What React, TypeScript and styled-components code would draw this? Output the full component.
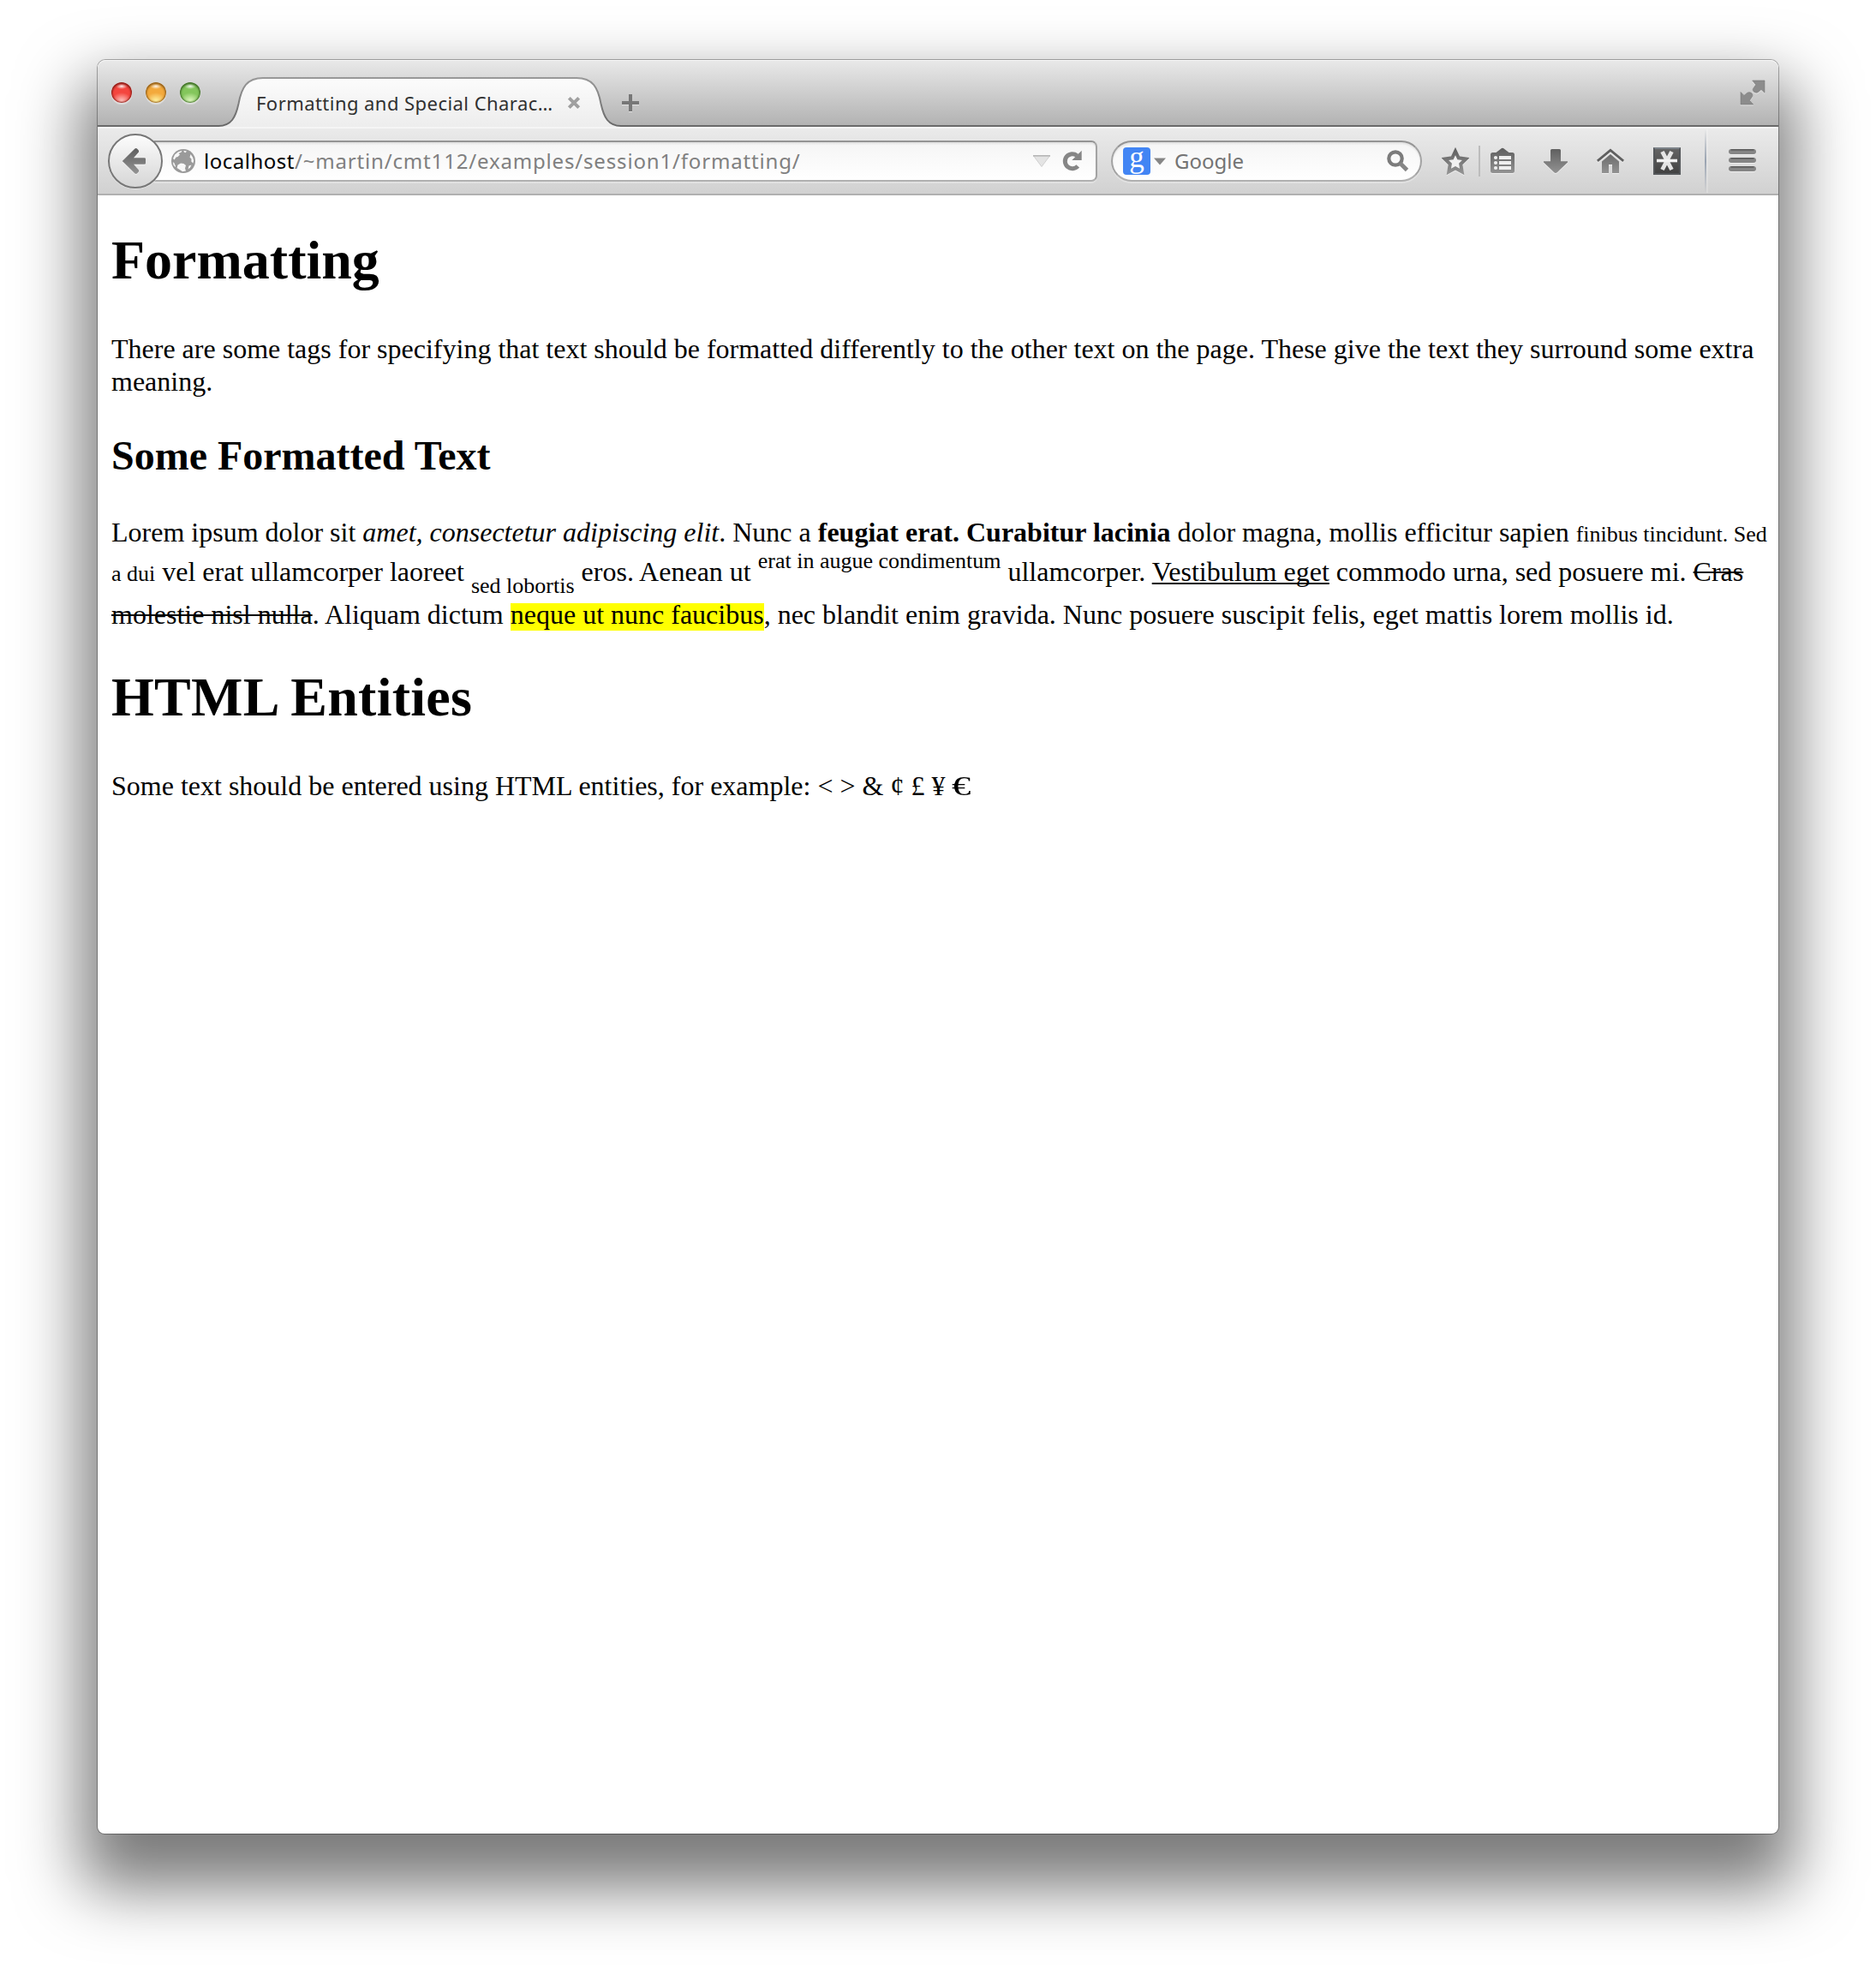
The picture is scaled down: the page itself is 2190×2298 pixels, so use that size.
import React from "react";
import styled, { createGlobalStyle } from "styled-components";

const GlobalStyle = createGlobalStyle`
  *, *::before, *::after { box-sizing: border-box; }
  body { margin: 0; background: #fff; }
`;

const uiFont = `"Noto Sans", "Open Sans", sans-serif`;

const Desktop = styled.div`
  height: 2298px;
  padding: 70px 114px 158px;
  background: #fff;
  overflow: hidden;
`;

const Window = styled.div`
  display: flex;
  flex-direction: column;
  height: 2070px;
  border-radius: 9px 9px 8px 8px;
  background: #fff;
  box-shadow:
    0 0 0 1px rgba(0, 0, 0, 0.3),
    0 45px 74px 19px rgba(0, 0, 0, 0.52);
`;

const TitleBar = styled.div`
  display: flex;
  align-items: flex-end;
  height: 78px;
  border-radius: 9px 9px 0 0;
  background:
    linear-gradient(#6a6a6a, #6a6a6a) 0 100% / 100% 2px no-repeat,
    linear-gradient(#e9e9e9, #b1b1b1);
  box-shadow: inset 0 1px 0 #f7f7f7;
`;

const Lights = styled.div`
  display: flex;
  align-self: flex-start;
  gap: 16px;
  width: 141px;
  padding: 26px 0 0 16px;
`;

const Light = styled.span<{ $rim: string; $mid: string; $glow: string }>`
  width: 24px;
  height: 24px;
  border-radius: 50%;
  background:
    radial-gradient(ellipse 7px 3.5px at 50% 4.5px, rgba(255, 255, 255, 0.95), rgba(255, 255, 255, 0) 100%),
    radial-gradient(ellipse 12px 10px at 50% 92%, ${(p) => p.$glow}, transparent 100%),
    ${(p) => p.$mid};
  box-shadow:
    inset 0 0 2px 1px ${(p) => p.$rim},
    inset 0 2px 3px ${(p) => p.$rim},
    0 2px 1px rgba(255, 255, 255, 0.45);
`;

const Tab = styled.div`
  display: grid;
  width: 470px;
  height: 58px;
  & > * { grid-area: 1 / 1; }
`;

const TabLabel = styled.div`
  display: flex;
  align-items: center;
  padding: 2px 47px 0 44px;
  font: 22px/30px ${uiFont};
  color: #303030;
`;

const TabTitle = styled.span`
  flex: 1;
  white-space: nowrap;
  letter-spacing: 0.45px;
`;

const NewTab = styled.div`
  align-self: flex-end;
  width: 24px;
  height: 39px;
`;

const FullScreen = styled.div`
  margin-left: auto;
  align-self: flex-start;
  padding: 23px 15px 0 0;
`;

const Glyph = styled.svg`
  display: block;
  flex: none;
  filter: drop-shadow(0 1.5px 0 rgba(255, 255, 255, 0.55));
`;

const NavBar = styled.div`
  display: flex;
  align-items: center;
  height: 80px;
  padding: 2px 26px 0 12px;
  border-bottom: 2px solid #b0b0b0;
  background:
    linear-gradient(#f5f5f5, #f5f5f5) 0 0 / 100% 2px no-repeat,
    linear-gradient(#ebebeb, #d1d1d1);
`;

const BackButton = styled.div`
  display: flex;
  align-items: center;
  justify-content: center;
  z-index: 1;
  flex: none;
  width: 64px;
  height: 64px;
  border: 2px solid #777;
  border-radius: 50%;
  background: linear-gradient(#fcfcfc, #d6d6d6);
  box-shadow: inset 0 1px 0 #fff, 0 1px 0 rgba(255, 255, 255, 0.5);
`;

const Field = styled.div`
  display: flex;
  align-items: center;
  height: 48px;
  border: 2px solid #a3a3a3;
  border-top-color: #949494;
  border-bottom-color: #b0b0b0;
  background: linear-gradient(#f5f5f5, #fff);
  box-shadow: inset 0 2px 2px rgba(0, 0, 0, 0.08), 0 2px 0 rgba(255, 255, 255, 0.3);
  font: 24px/40px ${uiFont};
  white-space: nowrap;
`;

const UrlField = styled(Field)`
  width: 1101px;
  margin-left: -10px;
  padding: 0 15px 0 20px;
  border-left: 0;
  border-radius: 0 7px 7px 0;
  color: #808080;
`;

const Address = styled.span`
  flex: 1;
  margin-left: 10px;
  letter-spacing: 0.83px;
`;

const Host = styled.span`
  color: #000;
  letter-spacing: 0.5px;
`;

const SearchField = styled(Field)`
  width: 363px;
  margin-left: 16px;
  padding: 0 13px 0 12px;
  border-radius: 24px;
  color: #747474;
`;

const Engine = styled.span`
  width: 32px;
  height: 32px;
  border-radius: 4px;
  background: #4285f4;
  color: #fff;
  font: 35px/24px "Liberation Serif", serif;
  text-align: center;
`;

const Placeholder = styled.span`
  flex: 1;
  margin-left: 10px;
`;

const Action = styled.div<{ $before: number }>`
  flex: none;
  margin-left: ${(p) => p.$before}px;
`;

const Divider = styled.div`
  flex: none;
  width: 2px;
  height: 36px;
  margin-left: 11px;
  background: #bcbcbc;
`;

const PanelDivider = styled.div`
  flex: none;
  width: 2px;
  height: 74px;
  margin-left: 28px;
  background: linear-gradient(rgba(150, 162, 178, 0), #99a3b1 50%, rgba(150, 162, 178, 0));
  box-shadow: 2px 0 0 rgba(255, 255, 255, 0.2);
`;

const Tile = styled.div`
  display: flex;
  align-items: center;
  justify-content: center;
  width: 32px;
  height: 32px;
  border: 2px solid #54575a;
  border-top-color: #7b8187;
  background: linear-gradient(#636363, #424242);
`;

const Page = styled.main`
  flex: 1;
  padding: 0 12px 0 16px;
  color: #000;
  font: 32px/38px "Liberation Serif", "Times New Roman", serif;
`;

const Title = styled.h1<{ $tracking?: number }>`
  margin: 41px 0 47px;
  font-size: 64px;
  line-height: 74px;
  letter-spacing: ${(p) => p.$tracking ?? 0}px;

  &:first-child {
    margin-top: 39px;
  }
`;

const Subtitle = styled.h2`
  margin: 40px 0 42px;
  font-size: 48px;
  line-height: 56px;
`;

const Paragraph = styled.p`
  margin: 0;
`;

const Small = styled.small`
  font-size: 26px;
  line-height: 28px;
`;

const Sub = styled.sub`
  font-size: 26px;
  line-height: 28px;
  vertical-align: -14px;
`;

const Sup = styled.sup`
  font-size: 26px;
  line-height: 30px;
  vertical-align: 15px;
`;

const Underlined = styled.u`
  text-decoration-thickness: 2px;
  text-underline-offset: 2px;
  text-decoration-skip-ink: none;
`;

const Struck = styled.s`
  text-decoration-thickness: 2px;
`;

const Mark = styled.mark`
  padding-bottom: 2px;
  color: #000;
  background: linear-gradient(#ff0, #ff0) 0 5px / 100% 32px no-repeat;
`;

const WideSign = styled.span`
  display: inline-block;
  transform: scaleX(1.4);
  transform-origin: 0 50%;
`;

const SharedInk = () => (
  <svg width="0" height="0" style={{ display: "block" }}>
    <defs>
      <linearGradient id="ink" gradientUnits="userSpaceOnUse" x1="0" y1="0" x2="0" y2="32">
        <stop offset="0" stopColor="#5c5c5c" />
        <stop offset="1" stopColor="#969696" />
      </linearGradient>
    </defs>
  </svg>
);

const TabShape = () => (
  <svg width="470" height="58" viewBox="0 0 470 58">
    <defs>
      <linearGradient id="tabFill" x1="0" y1="0" x2="0" y2="1">
        <stop offset="0" stopColor="#fcfcfc" />
        <stop offset="1" stopColor="#ededed" />
      </linearGradient>
      <linearGradient id="tabEdge" gradientUnits="userSpaceOnUse" x1="0" y1="0" x2="0" y2="58">
        <stop offset="0" stopColor="#999" />
        <stop offset="1" stopColor="#666" />
      </linearGradient>
    </defs>
    <path
      d="M0 57C15 57 20 47 23.500 31C27 12 33 1 52 1H418C437 1 443 12 446.500 31C450 47 455 57 470 57V58H0Z"
      fill="url(#tabFill)"
    />
    <path
      d="M0 57C15 57 20 47 23.500 31C27 12 33 1 52 1H418C437 1 443 12 446.500 31C450 47 455 57 470 57"
      fill="none"
      stroke="url(#tabEdge)"
      strokeWidth="2"
    />
  </svg>
);

const CloseIcon = () => (
  <Glyph width="16" height="16" viewBox="0 0 16 16">
    <path d="M2.300 2.300L13.700 13.700M13.700 2.300L2.300 13.700" stroke="#a0a0a0" strokeWidth="4" />
  </Glyph>
);

const PlusIcon = () => (
  <Glyph width="22" height="22" viewBox="0 0 22 22">
    <path d="M9 1h4v8h8v4h-8v8H9v-8H1V9h8z" fill="#777" />
  </Glyph>
);

const FullScreenIcon = () => (
  <Glyph width="30" height="30" viewBox="0 0 30 30">
    <g fill="#8c8c8c" stroke="#777" strokeWidth=".6">
      <path d="M14.700 1H29V15.300L25 11.500L21.500 14.500C19 16.500 14 14 15.500 10.500L18.700 6Z" />
      <path d="M1 14.500L5 18.500L8.500 15.500C11.500 13.500 16 16 14.700 19.500L11.500 24.300L15.700 29H1Z" />
    </g>
  </Glyph>
);

const BackIcon = () => (
  <Glyph width="32" height="32" viewBox="0 0 32 32">
    <path
      d="M.8 16L15.500 1.500Q17 .5 18.500 2L20 3.800V5.500L14 12.200H26.500Q28 12.200 28 13.500V18.500Q28 19.800 26.500 19.800H14L20 26.500V28.300L18.500 30Q17 31.500 15.500 30.500Z"
      fill="url(#ink)"
    />
  </Glyph>
);

const GlobeIcon = () => (
  <svg width="28" height="28" viewBox="0 0 28 28">
    <circle cx="14" cy="14" r="14" fill="#9a9a9a" />
    <g fill="#f7f7f7">
      <path d="M2 11L4 6.500L8 3.200L12.500 1.800L11.500 3.800L8.500 5L10 6.500L7.500 9L5.500 9.500L3.500 12.500Z" />
      <path d="M14.500 1.800L18 2.500L16.500 4.200L14.800 3.500Z" />
      <path d="M22.500 6L25 9.500L26.200 13.500L25.300 16.500L23.300 14.500L23.500 11.500L21.500 9.500Z" />
      <path d="M7.500 18.500L11 16.500L14.500 17L17 19L16 22.500L17 25.500L13 26.200L10.500 24.500L6.500 22Z" />
      <path d="M1.800 15L3.500 16.500L5 20L4.500 21L2.500 18.500Z" />
      <path d="M20.500 19.500L23.500 18.500L22 21.500L19.500 23.500Z" />
    </g>
  </svg>
);

const HistoryIcon = () => (
  <svg width="20" height="14" viewBox="0 0 20 14">
    <path d="M.5 .8H19.500L10 13.500Z" fill="#e4e4e4" stroke="#cfcfcf" strokeWidth="1" />
    <path d="M0 .8H20" stroke="#b5b5b5" strokeWidth="1.500" />
  </svg>
);

const ReloadIcon = () => (
  <Glyph width="24" height="26" viewBox="0 0 24 26" style={{ marginLeft: 14 }}>
    <path d="M18.200 18.800A8.500 8.500 0 1 1 17.200 6.600" fill="none" stroke="#868686" strokeWidth="5" />
    <path d="M22.700 .7V12H11.300Z" fill="#868686" />
  </Glyph>
);

const CaretIcon = () => (
  <svg width="14" height="9" viewBox="0 0 14 9" style={{ marginLeft: 4 }}>
    <path d="M0 .5H14L7 8.500Z" fill="#858585" />
  </svg>
);

const SearchIcon = () => (
  <Glyph width="26" height="26" viewBox="0 0 26 26">
    <circle cx="10" cy="10" r="7.700" fill="none" stroke="#7b7b7b" strokeWidth="4.200" />
    <path d="M15.500 15.500L23.500 23.500" stroke="#858585" strokeWidth="4.800" />
  </Glyph>
);

const StarIcon = () => (
  <Glyph width="32" height="32" viewBox="0 0 32 32">
    <path
      d="M16 4.500L19.700 12.300L28.300 13.500L22.200 19.500L23.700 28.500L16 24.300L8.300 28.500L9.800 19.500L3.700 13.500L12.300 12.300Z"
      fill="#f1f1f1"
      stroke="url(#ink)"
      strokeWidth="4"
    />
  </Glyph>
);

const BookmarksIcon = () => (
  <Glyph width="32" height="32" viewBox="0 0 32 32">
    <path d="M4.500 6H8.500L15 1Q16 .3 17 1L23.500 6H27.500Q30 6 30 8.500V27.500Q30 30 27.500 30H4.500Q2 30 2 27.500V8.500Q2 6 4.500 6Z" fill="url(#ink)" />
    <g fill="#efefef">
      <circle cx="8" cy="12" r="2.100" />
      <circle cx="8" cy="18" r="2.100" />
      <circle cx="8" cy="24" r="2.100" />
      <path d="M12 10H26V14H12ZM12 16H26V20H12ZM12 22H26V26H12Z" />
    </g>
  </Glyph>
);

const DownloadIcon = () => (
  <Glyph width="32" height="32" viewBox="0 0 32 32">
    <path d="M11.500 2H20.500Q22 2 22 3.500V16.300H30V17.500L18 29Q16 31 14 29L2 17.500V16.300H10V3.500Q10 2 11.500 2Z" fill="url(#ink)" />
  </Glyph>
);

const HomeIcon = () => (
  <Glyph width="32" height="32" viewBox="0 0 32 32">
    <path d="M.8 15.800L16 3.300L31.200 15.800" fill="none" stroke="#5f5f5f" strokeWidth="2.800" />
    <path d="M16 8L26 16.500V30H18V20H14V30H6V16.500Z" fill="url(#ink)" />
  </Glyph>
);

const AsteriskIcon = () => (
  <svg width="28" height="28" viewBox="0 0 28 28">
    <g stroke="#f1f1f1" fill="none">
      <path d="M8.500 3L19.500 24M19.500 3L8.500 24" strokeWidth="4.800" opacity=".92" />
      <path d="M2 13.500H26" strokeWidth="3.600" />
    </g>
  </svg>
);

const MenuIcon = () => (
  <Glyph width="32" height="32" viewBox="0 0 32 32">
    {[2, 12, 22].map((y) => (
      <g key={y}>
        <rect x="0" y={y} width="32" height="6" rx="3" fill="#858585" />
        <path d={`M2.500 ${y + 0.8}H29.500`} stroke="#5a5a5a" strokeWidth="1.600" />
      </g>
    ))}
  </Glyph>
);

export default function App() {
  return (
    <Desktop>
      <GlobalStyle />
      <SharedInk />
      <Window>
        <TitleBar>
          <Lights>
            <Light $rim="#8f1d17" $mid="#f4463f" $glow="#ffc9c4" />
            <Light $rim="#94601a" $mid="#f3a93c" $glow="#fff6a6" />
            <Light $rim="#3f6f26" $mid="#84c65c" $glow="#e4fbc4" />
          </Lights>
          <Tab>
            <TabShape />
            <TabLabel>
              <TabTitle>Formatting and Special Charac…</TabTitle>
              <CloseIcon />
            </TabLabel>
          </Tab>
          <NewTab>
            <PlusIcon />
          </NewTab>
          <FullScreen>
            <FullScreenIcon />
          </FullScreen>
        </TitleBar>

        <NavBar>
          <BackButton>
            <BackIcon />
          </BackButton>
          <UrlField>
            <GlobeIcon />
            <Address>
              <Host>localhost</Host>/~martin/cmt112/examples/session1/formatting/
            </Address>
            <HistoryIcon />
            <ReloadIcon />
          </UrlField>
          <SearchField>
            <Engine>g</Engine>
            <CaretIcon />
            <Placeholder>Google</Placeholder>
            <SearchIcon />
          </SearchField>
          <Action $before={23}>
            <StarIcon />
          </Action>
          <Divider />
          <Action $before={10}>
            <BookmarksIcon />
          </Action>
          <Action $before={30}>
            <DownloadIcon />
          </Action>
          <Action $before={32}>
            <HomeIcon />
          </Action>
          <Action $before={34}>
            <Tile>
              <AsteriskIcon />
            </Tile>
          </Action>
          <PanelDivider />
          <Action $before={26}>
            <MenuIcon />
          </Action>
        </NavBar>

        <Page>
          <Title>Formatting</Title>
          <Paragraph>
            There are some tags for specifying that text should be formatted differently to the other text on the page.
            These give the text they surround some extra meaning.
          </Paragraph>
          <Subtitle>Some Formatted Text</Subtitle>
          <Paragraph>
            Lorem ipsum dolor sit <em>amet, consectetur adipiscing elit</em>. Nunc a{" "}
            <strong>feugiat erat. Curabitur lacinia</strong> dolor magna, mollis efficitur sapien{" "}
            <Small>finibus tincidunt. Sed a dui</Small> vel erat ullamcorper laoreet <Sub>sed lobortis</Sub> eros.
            Aenean ut <Sup>erat in augue condimentum</Sup> ullamcorper. <Underlined>Vestibulum eget</Underlined> commodo
            urna, sed posuere mi. <Struck>Cras molestie nisl nulla</Struck>. Aliquam dictum{" "}
            <Mark>neque ut nunc faucibus</Mark>, nec blandit enim gravida. Nunc posuere suscipit felis, eget mattis lorem
            mollis id.
          </Paragraph>
          <Title $tracking={0.25}>HTML Entities</Title>
          <Paragraph>
            Some text should be entered using HTML entities, for example: &lt; &gt; &amp; ¢ £ ¥ <WideSign>€</WideSign>
          </Paragraph>
        </Page>
      </Window>
    </Desktop>
  );
}
